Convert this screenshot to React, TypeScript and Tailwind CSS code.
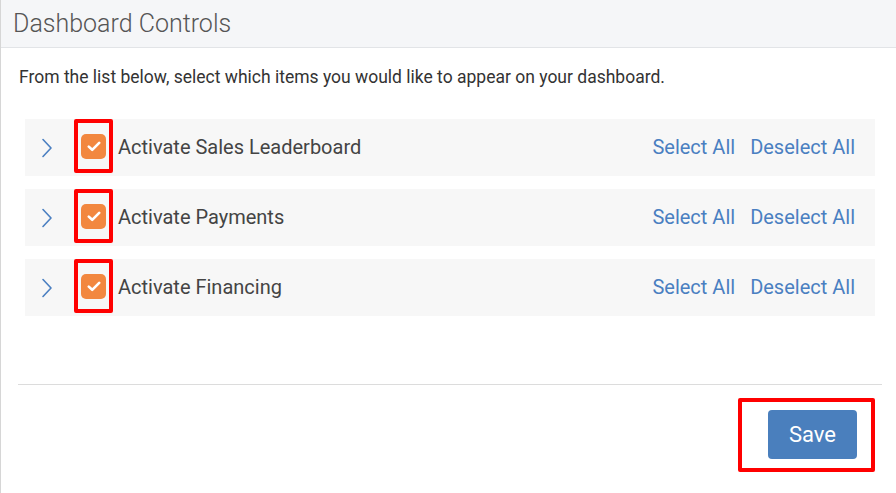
import React from "react";

const items = ["Activate Sales Leaderboard", "Activate Payments", "Activate Financing"];

function Chevron() {
  return (
    <svg width="12" height="20" viewBox="0 0 12 20" fill="none">
      <path d="M2 1.5 L10 10 L2 18.5" stroke="#4a7fc1" strokeWidth="1.6" strokeLinecap="round" strokeLinejoin="round" />
    </svg>
  );
}

function CheckBox() {
  return (
    <div className="w-[25px] h-[25px] rounded-[5px] bg-[#f2873f] flex items-center justify-center">
      <svg width="14" height="11" viewBox="0 0 14 11" fill="none">
        <path d="M1.8 5.6 L5.2 8.8 L12.2 1.8" stroke="#ffffff" strokeWidth="2.6" strokeLinecap="round" strokeLinejoin="round" />
      </svg>
    </div>
  );
}

function Row({ label }: { label: string }) {
  return (
    <div className="h-[57px] bg-[#f7f7f7] flex items-start pl-[16px] pr-[20px]">
      <div className="h-[57px] flex items-center w-[33px]">
        <Chevron />
      </div>
      {/* highlighted checkbox */}
      <div className="w-[39px] h-[54px] border-4 border-[#ff0000] rounded-[2px] flex items-center justify-center">
        <CheckBox />
      </div>
      <div className="h-[57px] flex items-center flex-1 pl-[5px] pb-[2px] text-[20px] text-[#444]">{label}</div>
      <div className="h-[57px] flex items-center pb-[2px] gap-[15px] text-[20px] text-[#4a7fc1]">
        <span>Select All</span>
        <span>Deselect All</span>
      </div>
    </div>
  );
}

export default function App() {
  return (
    <div
      className="w-[896px] h-[493px] bg-white border-l border-[#d6d6d6] flex flex-col"
      style={{ fontFamily: "Roboto, 'Liberation Sans', sans-serif" }}
    >
      <div className="h-[48px] bg-[#f5f6f8] border-b border-[#e2e4e7] flex items-center pl-[12px]">
        <span className="text-[25px] text-[#555] font-light">Dashboard Controls</span>
      </div>
      <div className="pt-[17px] pl-[18px] text-[17.5px] leading-[24px] text-[#333]">
        From the list below, select which items you would like to appear on your dashboard.
      </div>
      <div className="mt-[30px] ml-[24px] w-[850px] flex flex-col gap-[13px]">
        {items.map((label) => (
          <Row key={label} label={label} />
        ))}
      </div>
      <div className="mt-[68px] ml-[17px] mr-[14px] border-t border-[#dcdcdc]" />
      <div className="flex justify-end pr-[21px] pt-[13px]">
        <div className="w-[137px] h-[74px] border-4 border-[#ff0000] rounded-[2px] flex items-start justify-end pt-[8px] pr-[14px]">
          <button className="w-[89px] h-[49px] rounded-[4px] bg-[#4a7fbd] text-white text-[22px]">Save</button>
        </div>
      </div>
    </div>
  );
}
